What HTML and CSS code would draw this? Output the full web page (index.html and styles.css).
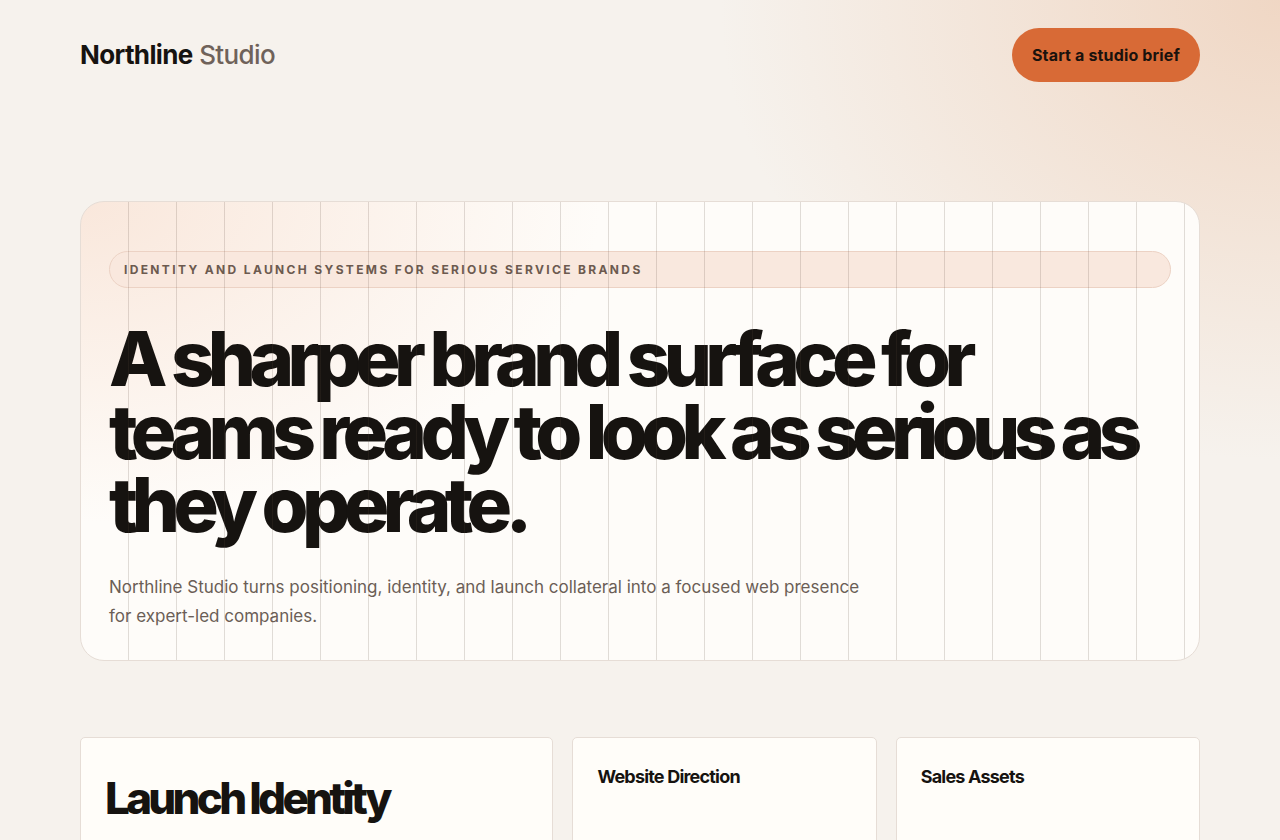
FILE: index.html
```html
<!DOCTYPE html>
<html lang="en">
<head>
<meta charset="utf-8">
<title>Northline Studio</title>
<link rel="stylesheet" href="styles.css">
</head>
<body>
<div class="page">
  <header class="topbar">
    <a class="logo" href="#"><span class="logo-main">Northline</span> <span class="logo-sub">Studio</span></a>
    <a class="cta" href="#">Start a studio brief</a>
  </header>

  <section class="hero">
    <div class="hero-inner">
      <div class="badge">Identity and launch systems for serious service brands</div>
      <h1 class="hero-title">A sharper brand surface for teams ready to look as serious as they operate.</h1>
      <p class="hero-copy">Northline Studio turns positioning, identity, and launch collateral into a focused web presence for expert-led companies.</p>
    </div>
    <div class="grid-lines" aria-hidden="true"></div>
  </section>

  <section class="services">
    <article class="card card-lead">
      <h2 class="card-title-lg">Launch Identity</h2>
    </article>
    <article class="card">
      <h3 class="card-title">Website Direction</h3>
    </article>
    <article class="card">
      <h3 class="card-title">Sales Assets</h3>
    </article>
  </section>
</div>
</body>
</html>
```

FILE: styles.css
```css
* { box-sizing: border-box; }

html, body {
  margin: 0;
  padding: 0;
}

body {
  font-family: Inter, "Noto Sans", "Liberation Sans", sans-serif;
  color: #161310;
  background:
    radial-gradient(ellipse 560px 460px at 1280px 0px, rgba(238, 208, 186, 0.8), rgba(238, 208, 186, 0) 100%),
    #f6f2ed;
  min-height: 840px;
  overflow: hidden;
}

.page {
  width: 1120px;
  margin: 0 auto;
}

.topbar {
  display: flex;
  align-items: center;
  justify-content: space-between;
  padding-top: 28px;
  height: 82px;
}

.logo {
  text-decoration: none;
  font-size: 26px;
  letter-spacing: -0.65px;
  line-height: 1;
}

.logo-main {
  font-weight: 700;
  color: #161310;
}

.logo-sub {
  font-weight: 500;
  color: #6f625a;
}

.cta {
  display: inline-flex;
  align-items: center;
  justify-content: center;
  height: 54px;
  width: 188px;
  border-radius: 27px;
  background: #d86a36;
  color: #1a120d;
  font-weight: 700;
  font-size: 16px;
  letter-spacing: 0.15px;
  text-decoration: none;
}

.hero {
  position: relative;
  margin-top: 119px;
  border: 1px solid #e6ddd6;
  border-radius: 24px;
  overflow: hidden;
  background:
    radial-gradient(ellipse 520px 320px at 0px 0px, rgba(248, 226, 212, 0.8), rgba(248, 226, 212, 0) 100%),
    #fefcf9;
}

.hero-inner {
  padding: 49px 28px 29px 28px;
}

.grid-lines {
  position: absolute;
  inset: 0;
  pointer-events: none;
  background-image: linear-gradient(to right, rgba(90, 70, 60, 0.18) 0, rgba(90, 70, 60, 0.18) 1px, transparent 1px);
  background-size: 48px 100%;
  background-position: 47px 0;
}

.badge {
  height: 37px;
  display: flex;
  align-items: center;
  padding: 0 14px;
  border: 1px solid #ecd2c4;
  border-radius: 19px;
  background: #f9e8de;
  color: #6c5a4f;
  font-size: 12px;
  font-weight: 700;
  letter-spacing: 2.35px;
  text-transform: uppercase;
}

.hero-title {
  margin: 34px 0 0 0;
  font-size: 76px;
  line-height: 73px;
  font-weight: 800;
  letter-spacing: -0.087em;
  color: #161310;
  max-width: 1060px;
}

.hero-copy {
  margin: 32px 0 0 0;
  max-width: 760px;
  font-size: 17px;
  line-height: 29px;
  color: #6b5e56;
}

.services {
  display: grid;
  grid-template-columns: 473fr 304fr 304fr;
  gap: 19px;
  margin-top: 76px;
}

.card {
  background: #fffdf9;
  border: 1px solid #e6ddd6;
  border-radius: 5px;
  padding: 27px 24px;
  height: 140px;
}

.card-title-lg {
  margin: 9px 0 0 0;
  font-size: 44px;
  line-height: 1.1;
  font-weight: 800;
  letter-spacing: -0.085em;
}

.card-title {
  margin: 0;
  font-size: 18px;
  line-height: 24px;
  font-weight: 700;
  letter-spacing: -0.8px;
}
```
